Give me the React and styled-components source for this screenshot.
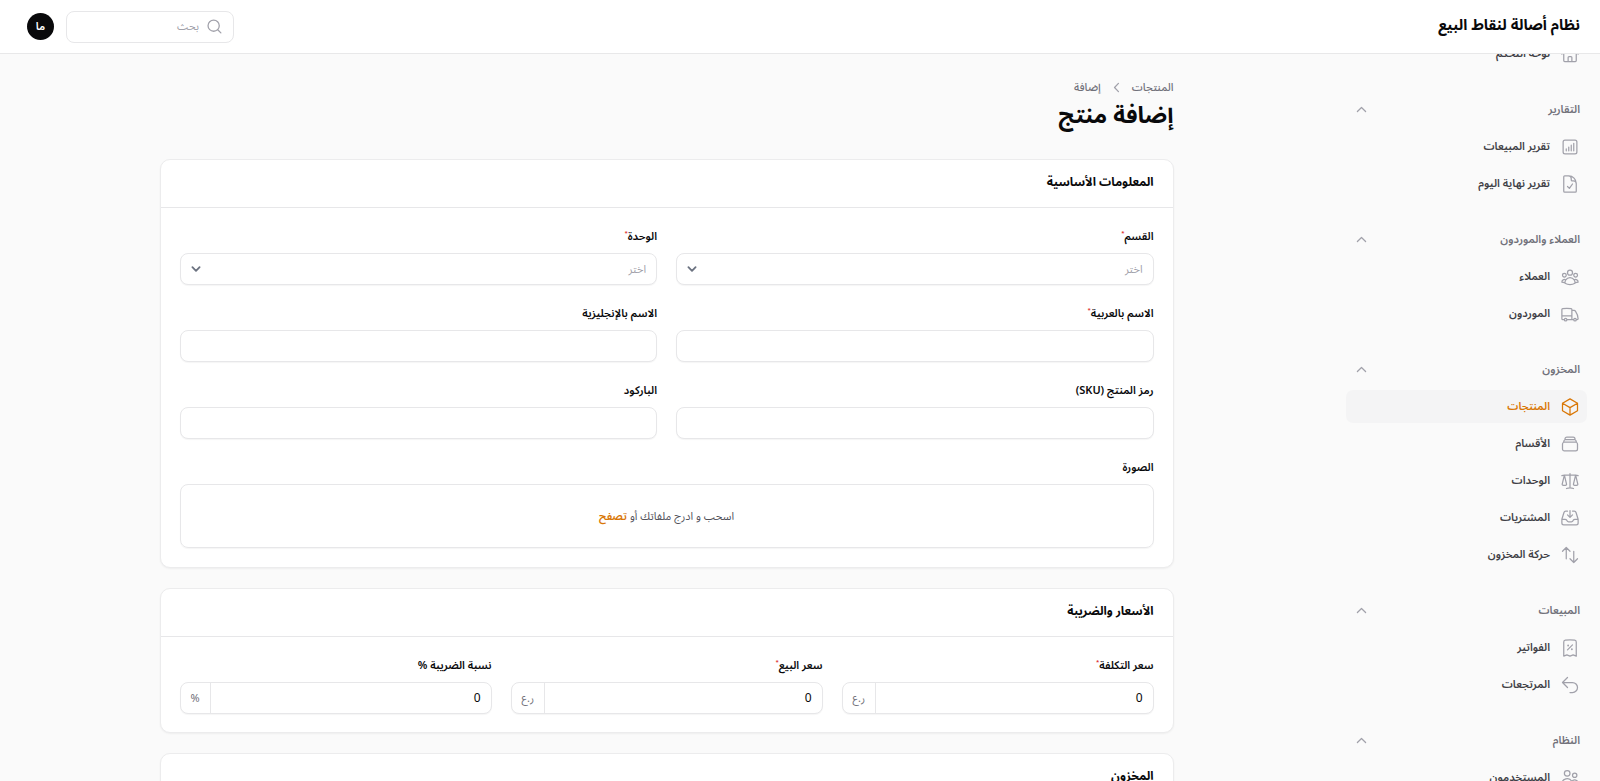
import { useLayoutEffect, useRef } from "react";
import styled, { createGlobalStyle } from "styled-components";
import {
    HiOutlineHome,
    HiOutlineChartBarSquare,
    HiOutlineDocumentCheck,
    HiOutlineUserGroup,
    HiOutlineTruck,
    HiOutlineCube,
    HiOutlineRectangleStack,
    HiOutlineScale,
    HiOutlineInboxArrowDown,
    HiOutlineArrowsUpDown,
    HiOutlineReceiptPercent,
    HiOutlineArrowUturnLeft,
    HiOutlineUsers,
} from "react-icons/hi2";

const GlobalStyle = createGlobalStyle`
    *, *::before, *::after {
        box-sizing: border-box;
    }
    body {
        margin: 0;
        background: #fafafa;
        color: #09090b;
        font-family: "Noto Sans Arabic", "Noto Sans", sans-serif;
        font-size: 11px;
    }
    button, input, select {
        font: inherit;
        color: inherit;
    }
`

const Layout = styled.div`
    display: flex;
    flex-direction: column;
    height: 100vh;
    overflow: hidden;
`

const Topbar = styled.header`
    display: flex;
    align-items: center;
    gap: 12px;
    height: 54px;
    flex-shrink: 0;
    padding: 0 20px 0 27px;
    background: #fff;
    border-bottom: 1px solid #e8e8e9;
    z-index: 1;
`

const Brand = styled.a`
    margin-left: auto;
    margin-bottom: 4px;
    font-size: 15px;
    line-height: 24px;
    font-weight: 700;
    color: #09090b;
    text-decoration: none;
`

const Search = styled.label`
    display: flex;
    align-items: center;
    gap: 7px;
    width: 168px;
    height: 32px;
    padding: 0 10px;
    border: 1px solid #e7e7e9;
    border-radius: 8px;
    background: #fff;
    color: #a1a1aa;

    input {
        flex: 1;
        min-width: 0;
        padding: 0;
        border: 0;
        outline: 0;
        background: none;
    }
    input::placeholder {
        color: #a1a1aa;
    }
`

const Avatar = styled.button`
    width: 27px;
    height: 27px;
    padding: 0;
    border: 0;
    border-radius: 50%;
    background: #09090b;
    color: #fff;
    font-weight: 600;
    line-height: 24px;
`

const Body = styled.div`
    display: flex;
    flex: 1;
    min-height: 0;
`

const Sidebar = styled.nav`
    display: flex;
    flex-direction: column;
    gap: 23px;
    width: 267px;
    flex-shrink: 0;
    padding: 27px 13px;
    overflow-y: auto;
    scrollbar-width: none;
`

const NavGroup = styled.div`
    display: flex;
    flex-direction: column;
    gap: 4px;
`

const GroupButton = styled.button`
    display: flex;
    align-items: center;
    justify-content: space-between;
    height: 33px;
    flex-shrink: 0;
    padding: 0 7px;
    border: 0;
    background: none;
    color: #71717a;
    font-weight: 600;

    svg {
        color: #a1a1aa;
    }
`

const NavLink = styled.a`
    display: flex;
    align-items: center;
    gap: 10px;
    height: 33px;
    flex-shrink: 0;
    padding: 0 7px;
    border-radius: 7px;
    background: ${({ $active }) => ($active ? "#f4f4f5" : "none")};
    color: ${({ $active }) => ($active ? "#d97706" : "#3f3f46")};
    font-weight: 600;
    text-decoration: none;

    svg {
        width: 20px;
        height: 20px;
        color: ${({ $active }) => ($active ? "#d97706" : "#a1a1aa")};
    }
`

const Main = styled.main`
    flex: 1;
    min-width: 0;
    padding: 23px 27px;
    overflow-y: auto;
    scrollbar-width: none;
`

const Content = styled.div`
    display: flex;
    flex-direction: column;
    gap: 20px;
    max-width: 1014px;
    margin: 0 auto;
`

const PageHeader = styled.header`
    margin-bottom: 4px;

    h1 {
        margin: 0;
        font-size: 23px;
        line-height: 38px;
        font-weight: 700;
    }
`

const Breadcrumbs = styled.div`
    display: flex;
    align-items: center;
    gap: 7px;
    height: 20px;
    color: #71717a;
    font-weight: 500;

    a {
        color: inherit;
        text-decoration: none;
    }
    svg {
        color: #a1a1aa;
    }
`

const Card = styled.section`
    border: 1px solid #ececed;
    border-radius: 10px;
    background: #fff;
    box-shadow: 0 1px 2px rgba(0, 0, 0, 0.05);

    h2 {
        margin: 0;
        padding: 13px 19px 14px;
        border-bottom: 1px solid #e7e7e9;
        font-size: 12px;
        line-height: 20px;
        font-weight: 700;
    }
`

const Fields = styled.div`
    display: grid;
    grid-template-columns: repeat(${({ $columns }) => $columns}, minmax(0, 1fr));
    gap: 20px 19px;
    padding: 19px;
`

const FieldStyled = styled.div`
    display: flex;
    flex-direction: column;
    gap: 6px;
    grid-column: ${({ $wide }) => ($wide ? "1 / -1" : "auto")};

    label {
        line-height: 20px;
        font-weight: 600;
    }
    sup {
        color: #dc2626;
        font-size: 6px;
        line-height: 0;
    }
`

const Control = styled.div`
    display: flex;
    position: relative;
    height: 32px;
    margin-bottom: -1px;
    border: 1px solid #e7e7e9;
    border-radius: 8px;
    background: #fff;
    box-shadow: 0 1px 1px rgba(0, 0, 0, 0.04);

    input, select {
        flex: 1;
        width: 0;
        min-width: 0;
        padding: 0 10px;
        border: 0;
        outline: 0;
        background: none;
        appearance: none;
    }
    input {
        font-size: 12px;
    }
    select {
        color: #a1a1aa;
    }
    svg {
        position: absolute;
        left: 6px;
        top: 6px;
        pointer-events: none;
    }
`

const Suffix = styled.span`
    display: flex;
    align-items: center;
    padding: 0 10px;
    border-right: 1px solid #e7e7e9;
    color: #71717a;
`

const DropZone = styled.div`
    display: flex;
    align-items: center;
    justify-content: center;
    gap: 3px;
    height: 64px;
    border: 1px solid #e7e7e9;
    border-radius: 8px;
    box-shadow: 0 1px 1px rgba(0, 0, 0, 0.04);
    color: #52525b;

    button {
        padding: 0;
        border: 0;
        background: none;
        color: #d97706;
        font-weight: 600;
    }
`

const nav_data = [
    {
        items: [{ name: "لوحة التحكم", icon: HiOutlineHome }],
    },
    {
        title: "التقارير",
        items: [
            { name: "تقرير المبيعات", icon: HiOutlineChartBarSquare },
            { name: "تقرير نهاية اليوم", icon: HiOutlineDocumentCheck },
        ],
    },
    {
        title: "العملاء والموردون",
        items: [
            { name: "العملاء", icon: HiOutlineUserGroup },
            { name: "الموردون", icon: HiOutlineTruck },
        ],
    },
    {
        title: "المخزون",
        items: [
            { name: "المنتجات", icon: HiOutlineCube, active: true },
            { name: "الأقسام", icon: HiOutlineRectangleStack },
            { name: "الوحدات", icon: HiOutlineScale },
            { name: "المشتريات", icon: HiOutlineInboxArrowDown },
            { name: "حركة المخزون", icon: HiOutlineArrowsUpDown },
        ],
    },
    {
        title: "المبيعات",
        items: [
            { name: "الفواتير", icon: HiOutlineReceiptPercent },
            { name: "المرتجعات", icon: HiOutlineArrowUturnLeft },
        ],
    },
    {
        title: "النظام",
        items: [{ name: "المستخدمون", icon: HiOutlineUsers }],
    },
]

// 20x20 solid style chevrons and magnifier
const ChevronUp = () => (
    <svg width="17" height="17" viewBox="0 0 20 20" fill="none" stroke="currentColor" strokeWidth="1.5" strokeLinecap="round" strokeLinejoin="round">
        <path d="M5.2 12.3 10 7.7l4.8 4.6" />
    </svg>
)

const ChevronLeft = () => (
    <svg width="17" height="17" viewBox="0 0 20 20" fill="none" stroke="currentColor" strokeWidth="1.5" strokeLinecap="round" strokeLinejoin="round">
        <path d="M12.3 5.2 7.7 10l4.6 4.8" />
    </svg>
)

const SelectArrow = () => (
    <svg width="18" height="18" viewBox="0 0 20 20" fill="none" stroke="#6b7280" strokeWidth="2" strokeLinecap="round" strokeLinejoin="round">
        <path d="m6 8 4 4 4-4" />
    </svg>
)

const SearchIcon = () => (
    <svg width="17" height="17" viewBox="0 0 20 20" fill="none" stroke="currentColor" strokeWidth="1.5" strokeLinecap="round">
        <circle cx="9" cy="9" r="6.6" />
        <path d="m13.8 13.8 3.7 3.7" />
    </svg>
)

const Field = ({ id, label, required, wide, children }) => (
    <FieldStyled $wide={wide}>
        <label htmlFor={id}>
            {label}
            {required && <sup>*</sup>}
        </label>
        {children}
    </FieldStyled>
)

const TextField = ({ id, suffix, value, ...rest }) => (
    <Field id={id} {...rest}>
        <Control>
            <input id={id} type="text" defaultValue={value} />
            {suffix && <Suffix>{suffix}</Suffix>}
        </Control>
    </Field>
)

const SelectField = ({ id, ...rest }) => (
    <Field id={id} {...rest}>
        <Control>
            <select id={id}>
                <option>اختر</option>
            </select>
            <SelectArrow />
        </Control>
    </Field>
)

const App = () => {
    const sidebarRef = useRef(null)

    useLayoutEffect(() => {
        sidebarRef.current.scrollTop = 44
    }, [])

    return (
        <Layout dir="rtl">
            <GlobalStyle />
            <Topbar>
                <Brand href="#">نظام أصالة لنقاط البيع</Brand>
                <Search>
                    <SearchIcon />
                    <input type="search" placeholder="بحث" aria-label="بحث" />
                </Search>
                <Avatar>ما</Avatar>
            </Topbar>
            <Body>
                <Sidebar ref={sidebarRef}>
                    {nav_data.map((group, i) => (
                        <NavGroup key={i}>
                            {group.title && (
                                <GroupButton>
                                    {group.title}
                                    <ChevronUp />
                                </GroupButton>
                            )}
                            {group.items.map(({ name, icon: Icon, active }) => (
                                <NavLink key={name} href="#" $active={active}>
                                    <Icon />
                                    {name}
                                </NavLink>
                            ))}
                        </NavGroup>
                    ))}
                </Sidebar>
                <Main>
                    <Content>
                        <PageHeader>
                            <Breadcrumbs>
                                <a href="#">المنتجات</a>
                                <ChevronLeft />
                                <a href="#">إضافة</a>
                            </Breadcrumbs>
                            <h1>إضافة منتج</h1>
                        </PageHeader>

                        <Card>
                            <h2>المعلومات الأساسية</h2>
                            <Fields $columns={2}>
                                <SelectField id="category" label="القسم" required />
                                <SelectField id="unit" label="الوحدة" required />
                                <TextField id="name_ar" label="الاسم بالعربية" required />
                                <TextField id="name_en" label="الاسم بالإنجليزية" />
                                <TextField id="sku" label="رمز المنتج (SKU)" />
                                <TextField id="barcode" label="الباركود" />
                                <Field id="image" label="الصورة" wide>
                                    <DropZone>
                                        اسحب و ادرج ملفاتك أو <button id="image">تصفح</button>
                                    </DropZone>
                                </Field>
                            </Fields>
                        </Card>

                        <Card>
                            <h2>الأسعار والضريبة</h2>
                            <Fields $columns={3}>
                                <TextField id="cost" label="سعر التكلفة" required value="0" suffix="ر.ع" />
                                <TextField id="price" label="سعر البيع" required value="0" suffix="ر.ع" />
                                <TextField id="tax" label="نسبة الضريبة %" value="0" suffix="%" />
                            </Fields>
                        </Card>

                        <Card>
                            <h2>المخزون</h2>
                        </Card>
                    </Content>
                </Main>
            </Body>
        </Layout>
    )
}

export default App
